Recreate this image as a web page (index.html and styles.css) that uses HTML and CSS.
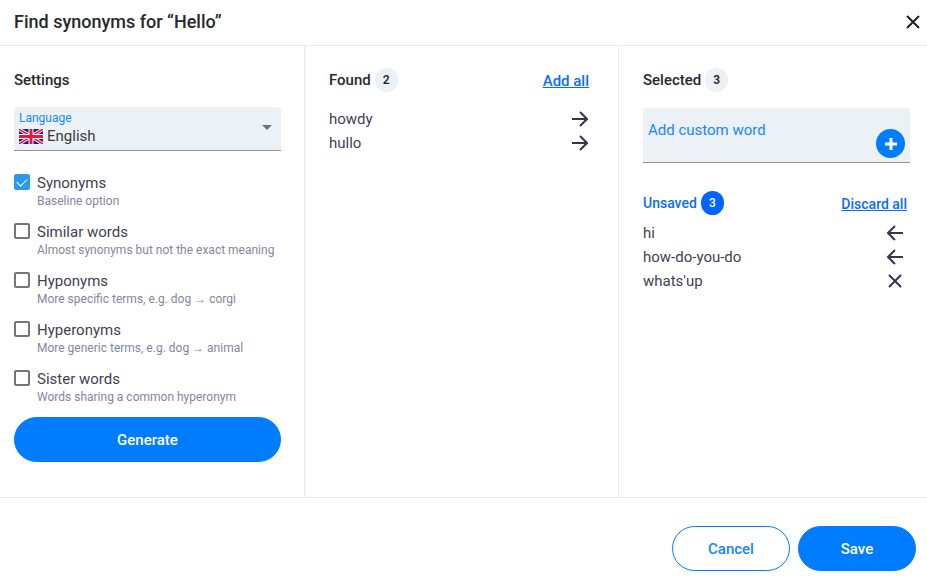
FILE: index.html
```html
<!DOCTYPE html>
<html lang="en">
<head>
<meta charset="utf-8">
<meta name="viewport" content="width=device-width, initial-scale=1">
<title>Find synonyms</title>
<link rel="stylesheet" href="styles.css">
</head>
<body>
<svg class="defs" aria-hidden="true">
  <symbol id="arrow-right" viewBox="0 0 16 16"><path d="M0 8h15M8 1l7 7-7 7"/></symbol>
  <symbol id="arrow-left" viewBox="0 0 16 16"><path d="M16 8H1M8 1L1 8l7 7"/></symbol>
  <symbol id="cross" viewBox="0 0 16 16"><path d="M2 2l12 12M14 2L2 14"/></symbol>
</svg>
<main class="dialog" role="dialog" aria-labelledby="title">
  <header class="dialog-header">
    <h1 class="dialog-title" id="title">Find synonyms for “Hello”</h1>
    <button class="icon-button close" type="button" aria-label="Close"><svg class="icon"><use href="#cross"/></svg></button>
  </header>

  <div class="columns">
    <section class="column settings">
      <div class="column-head"><h2 class="heading">Settings</h2></div>
      <div class="select-field">
        <label class="select-label" for="language">Language</label>
        <div class="select-row">
          <svg class="flag" viewBox="0 0 24 15" aria-hidden="true">
            <path fill="#10207c" d="M0 0h24v15H0z"/>
            <path stroke="#fff" stroke-width="3.4" d="M0 0l24 15M24 0L0 15"/>
            <path stroke="#f0143c" stroke-width="1.6" d="M0 0l24 15M24 0L0 15"/>
            <path stroke="#fff" stroke-width="5" d="M12 0v15M0 7.5h24"/>
            <path stroke="#f0143c" stroke-width="3" d="M12 0v15M0 7.5h24"/>
          </svg>
          <select class="select" id="language"><option>English</option></select>
        </div>
        <svg class="caret" viewBox="0 0 10 5" aria-hidden="true"><path d="M0 0h10L5 5z"/></svg>
      </div>
      <div class="options">
        <label class="option"><input class="checkbox" type="checkbox" checked><span class="option-text">Synonyms<small class="hint">Baseline option</small></span></label>
        <label class="option"><input class="checkbox" type="checkbox"><span class="option-text">Similar words<small class="hint">Almost synonyms but not the exact meaning</small></span></label>
        <label class="option"><input class="checkbox" type="checkbox"><span class="option-text">Hyponyms<small class="hint">More specific terms, e.g. dog → corgi</small></span></label>
        <label class="option"><input class="checkbox" type="checkbox"><span class="option-text">Hyperonyms<small class="hint">More generic terms, e.g. dog → animal</small></span></label>
        <label class="option"><input class="checkbox" type="checkbox"><span class="option-text">Sister words<small class="hint">Words sharing a common hyperonym</small></span></label>
      </div>
      <button class="button primary wide" type="button">Generate</button>
    </section>

    <section class="column found">
      <div class="column-head">
        <h2 class="heading">Found</h2><span class="badge">2</span>
        <a class="link" href="#">Add all</a>
      </div>
      <ul class="words">
        <li class="word">howdy<button class="icon-button" type="button" aria-label="Add howdy"><svg class="icon"><use href="#arrow-right"/></svg></button></li>
        <li class="word">hullo<button class="icon-button" type="button" aria-label="Add hullo"><svg class="icon"><use href="#arrow-right"/></svg></button></li>
      </ul>
    </section>

    <section class="column selected">
      <div class="column-head"><h2 class="heading">Selected</h2><span class="badge">3</span></div>
      <div class="custom-field">
        <input class="custom-input" type="text" placeholder="Add custom word" aria-label="Add custom word">
        <button class="add" type="button" aria-label="Add word"><svg class="plus" viewBox="0 0 14 14"><path d="M7 1v12M1 7h12"/></svg></button>
      </div>
      <div class="column-head unsaved">
        <h3 class="heading">Unsaved</h3><span class="badge">3</span>
        <a class="link" href="#">Discard all</a>
      </div>
      <ul class="words">
        <li class="word">hi<button class="icon-button" type="button" aria-label="Remove hi"><svg class="icon"><use href="#arrow-left"/></svg></button></li>
        <li class="word">how-do-you-do<button class="icon-button" type="button" aria-label="Remove how-do-you-do"><svg class="icon"><use href="#arrow-left"/></svg></button></li>
        <li class="word">whats'up<button class="icon-button" type="button" aria-label="Delete whats'up"><svg class="icon"><use href="#cross"/></svg></button></li>
      </ul>
    </section>
  </div>

  <footer class="dialog-footer">
    <button class="button outline" type="button">Cancel</button>
    <button class="button primary" type="button">Save</button>
  </footer>
</main>
</body>
</html>
```
FILE: styles.css
```css
* { box-sizing: border-box; }

body {
  margin: 0;
  background: #fff;
  color: #3f3f50;
  font: 15px/24px Roboto, "Liberation Sans", sans-serif;
}

button, input, select { font: inherit; }
button { cursor: pointer; }
.defs { display: none; }

.dialog {
  display: flex;
  flex-direction: column;
  min-height: 100vh;
}

.dialog-header {
  display: flex;
  align-items: center;
  justify-content: space-between;
  padding: 10px 6px 11px 14px;
  border-bottom: 1px solid #e9e9eb;
}

.dialog-title {
  margin: 0;
  color: #28282b;
  font-size: 18px;
  font-weight: 500;
  line-height: 24px;
}

.icon-button {
  display: flex;
  padding: 0;
  border: 0;
  background: none;
  color: #34344a;
}

.close { color: #202022; }

.icon {
  width: 16px;
  height: 16px;
  fill: none;
  stroke: currentColor;
  stroke-width: 2;
}

.columns {
  display: grid;
  grid-template-columns: 305fr 314fr 308fr;
  flex: 1;
}

.column {
  min-width: 0;
  padding: 20px 24px 34px;
  border-right: 1px solid #e9e9eb;
}

.settings { padding-left: 14px; padding-right: 23px; }
.selected { padding-right: 17px; border-right: 0; }

.column-head {
  display: flex;
  align-items: center;
  height: 28px;
  margin-bottom: 13px;
}

.heading {
  margin: 0;
  color: #28282b;
  font-size: 15px;
  font-weight: 500;
}

.badge {
  width: 23px;
  margin-left: 4px;
  border-radius: 12px;
  background: #ebf1f4;
  color: #28282b;
  font-size: 12px;
  font-weight: 600;
  text-align: center;
}

.link {
  margin-left: auto;
  padding-top: 2px;
  color: #0a6cff;
  font-weight: 500;
  text-decoration: underline;
}

.found .link { margin-right: 5px; }

.select-field {
  position: relative;
  padding: 3px 5px 4px;
  border-bottom: 1px solid #8f9497;
  border-radius: 3px 3px 0 0;
  background: #ebf1f4;
}

.select-label {
  display: block;
  color: #1a86ff;
  font-size: 12px;
  line-height: 16px;
}

.select-row { display: flex; align-items: center; gap: 4px; }
.flag { width: 24px; height: 15px; }

.select {
  flex: 1;
  padding: 0;
  border: 0;
  appearance: none;
  background: none;
  color: #3a3a40;
  line-height: 20px;
}

.caret {
  position: absolute;
  top: 18px;
  right: 9px;
  width: 10px;
  height: 5px;
  fill: #707274;
  pointer-events: none;
}

.options {
  display: grid;
  gap: 13px;
  margin: 22px 0 12px;
}

.option { display: flex; gap: 7px; line-height: 20px; }

.checkbox {
  flex: none;
  width: 16px;
  height: 16px;
  margin: 1px 0;
  border: 2px solid #76767a;
  border-radius: 2px;
  appearance: none;
}

.checkbox:checked {
  border-color: #2b98f0;
  background: #2b98f0;
}

.checkbox:checked::before {
  content: "";
  display: block;
  width: 5px;
  height: 9px;
  margin: 0 auto;
  border: solid #fff;
  border-width: 0 1px 1px 0;
  transform: rotate(45deg);
}

.hint {
  display: block;
  color: #85859a;
  font-size: 12px;
  line-height: 16px;
}

.button {
  min-width: 118px;
  height: 45px;
  border: 1px solid #007dff;
  border-radius: 23px;
  font-weight: 500;
}

.primary { background: #007dff; color: #fff; }
.outline { background: #fff; color: #1484ff; }
.wide { width: 100%; }

.words { margin: 0; padding: 0; list-style: none; }

.word {
  display: flex;
  align-items: center;
  justify-content: space-between;
  padding-right: 7px;
}

.found .word { padding-right: 6px; }

.custom-field {
  display: flex;
  align-items: flex-end;
  margin-top: 14px;
  padding: 10px 5px 4px;
  border-bottom: 1px solid #8f9497;
  border-radius: 3px 3px 0 0;
  background: #ebf1f4;
}

.custom-input {
  flex: 1;
  align-self: flex-start;
  min-width: 0;
  height: 40px;
  padding: 0 0 16px;
  border: 0;
  background: none;
  color: #3a3a40;
}

.custom-input::placeholder { color: #1a86ff; opacity: 1; }

.add {
  display: flex;
  align-items: center;
  justify-content: center;
  width: 29px;
  height: 29px;
  padding: 0;
  border: 0;
  border-radius: 50%;
  background: #007dff;
}

.plus { width: 14px; height: 14px; stroke: #fff; stroke-width: 3; }

.unsaved { margin: 26px 0 4px; }
.unsaved .heading { color: #0a6cff; font-size: 14px; }
.unsaved .badge { background: #0064ff; color: #fff; font-weight: 500; }
.unsaved .link { margin-right: 3px; font-size: 14px; }

.dialog-footer {
  display: flex;
  justify-content: flex-end;
  gap: 8px;
  padding: 28px 11px 6px;
  border-top: 1px solid #e9e9eb;
}
```
